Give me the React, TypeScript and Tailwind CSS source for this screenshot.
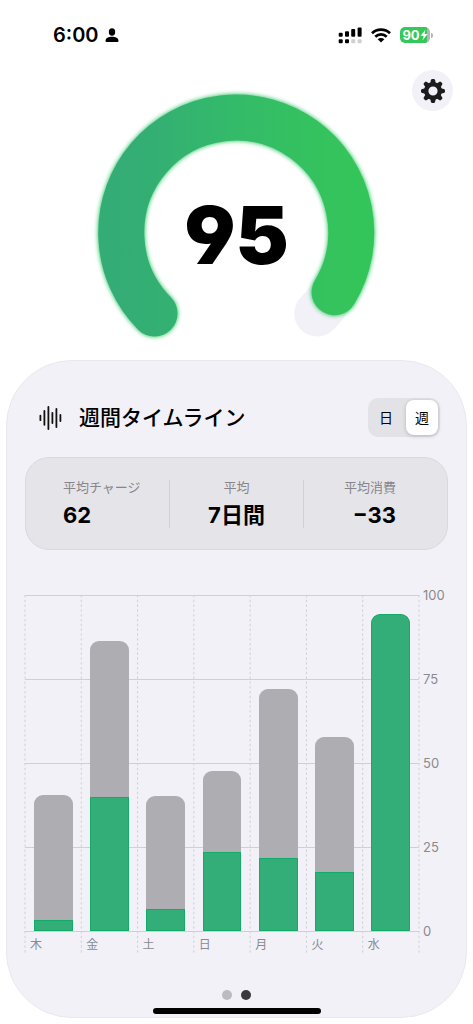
import { useState } from "react";

const days = [
  { label: "木", total: 40.6, charge: 3.4 },
  { label: "金", total: 86.4, charge: 40 },
  { label: "土", total: 40.3, charge: 6.6 },
  { label: "日", total: 47.7, charge: 23.4 },
  { label: "月", total: 72.1, charge: 21.7 },
  { label: "火", total: 57.6, charge: 17.5 },
  { label: "水", total: 94.4, charge: 94.4 },
];

const ticks = [100, 75, 50, 25, 0];

const ranges = ["日", "週"];

const fontClass = "font-['Inter','Noto_Sans_CJK_JP',sans-serif]";
const statLabelClass = "text-[13px] leading-5 text-[#85858a]";
const statValueClass = "mt-0.5 text-[22px] leading-8 font-bold text-black";

function SignalIcon() {
  return (
    <svg width="24" height="18" viewBox="0 0 24 18" aria-hidden="true">
      <g fill="#000">
        <rect x="0.7" y="6.8" width="4" height="4" rx="1" />
        <rect x="7" y="5.2" width="4" height="5.6" rx="1" />
        <rect x="13.2" y="3" width="4" height="7.8" rx="1" />
        <rect x="19.6" y="1.5" width="4" height="9.3" rx="1" />
        <rect x="0.7" y="13.2" width="4" height="4" rx="1" />
        <rect x="7" y="13.2" width="4" height="4" rx="1" />
      </g>
      <g fill="#d0d0d2">
        <rect x="13.2" y="13.2" width="4" height="4" rx="1" />
        <rect x="19.6" y="13.2" width="4" height="4" rx="1" />
      </g>
    </svg>
  );
}

function WifiIcon() {
  return (
    <svg width="20" height="15" viewBox="0 0 20 15" aria-hidden="true">
      <g fill="none" stroke="#000" strokeWidth="2.7">
        <path d="M1 5.3 A12.8 12.8 0 0 1 19 5.3" />
        <path d="M4.3 8.8 A8.1 8.1 0 0 1 15.7 8.8" />
      </g>
      <path
        d="M10 14.6 L6.7 11.3 A4.7 4.7 0 0 1 13.3 11.3 Z"
        fill="#000"
      />
    </svg>
  );
}

function Battery() {
  return (
    <div className="flex items-center gap-px" aria-label="90%">
      <div className="flex h-4 w-[30px] items-center justify-center rounded-[5px] bg-linear-to-r from-[#35c759] from-90% to-[#b5b5b8] to-90% text-white">
        <span className="text-[13px] leading-4 font-bold">90</span>
        <svg width="8" height="12" viewBox="0 0 8 12" aria-hidden="true">
          <path d="M5.6 0.5 L0.6 6.7 H3.6 L2.4 11.5 L7.6 5 H4.5 Z" fill="#fff" />
        </svg>
      </div>
      <div className="h-[5px] w-0.5 rounded-r-full bg-[#b5b5b8]" />
    </div>
  );
}

function GearIcon() {
  const teeth = [0, 45, 90, 135, 180, 225, 270, 315];
  return (
    <svg width="24" height="24" viewBox="-12 -12 24 24" aria-hidden="true">
      <g fill="#1c1c1e">
        {teeth.map((a) => (
          <path
            key={a}
            d="M-2.8 -7.5 L-2.1 -10.8 Q-1.8 -12 -0.8 -12 H0.8 Q1.8 -12 2.1 -10.8 L2.8 -7.5 Z"
            transform={`rotate(${a})`}
          />
        ))}
      </g>
      <circle r="6.8" fill="none" stroke="#1c1c1e" strokeWidth="4.4" />
    </svg>
  );
}

function WaveIcon() {
  return (
    <svg width="24" height="24" viewBox="0 0 24 24" aria-hidden="true">
      <path
        d="M1.4 9.6 V14.2 M5.4 5 V18.8 M9.4 1 V23 M13.4 6.8 V17 M17.4 3 V21 M21.4 9 V15"
        stroke="#111"
        strokeWidth="1.8"
        strokeLinecap="round"
      />
    </svg>
  );
}

function Gauge() {
  return (
    <svg
      className="col-start-1 row-start-1 justify-self-center"
      width="300"
      height="290"
      viewBox="1 0 300 290"
      aria-hidden="true"
    >
      <defs>
        <linearGradient id="arc" x1="0" y1="0.7" x2="1" y2="0.7">
          <stop offset="0" stopColor="#33ad75" />
          <stop offset="0.15" stopColor="#33af73" />
          <stop offset="0.5" stopColor="#34bb69" />
          <stop offset="1" stopColor="#34c55a" />
        </linearGradient>
        <filter
          id="glow"
          filterUnits="userSpaceOnUse"
          x="0"
          y="0"
          width="300"
          height="290"
        >
          <feGaussianBlur stdDeviation="2" />
        </filter>
      </defs>
      <g fill="none" strokeWidth="46" strokeLinecap="round">
        <path d="M68.5 243.5 A115 115 0 1 1 231.2 243.5" stroke="#f2f1f7" />
        <path
          d="M68.5 243.5 A115 115 0 1 1 248.6 222.2"
          stroke="#34c76a"
          strokeWidth="47"
          filter="url(#glow)"
        />
        <path
          d="M68.5 243.5 A115 115 0 1 1 248.6 222.2"
          stroke="url(#arc)"
        />
      </g>
    </svg>
  );
}

function WeekChart() {
  return (
    <div className="mt-[45px] flex text-[#8a8a8e]">
      <div className="grid flex-1">
        {/* Grid lines */}
        <svg
          className="col-start-1 row-start-1 h-[358px] w-full overflow-visible"
          aria-hidden="true"
        >
          {ticks.map((t) => (
            <line
              key={t}
              x1="0"
              x2="100%"
              y1={336 - t * 3.36 + 0.5}
              y2={336 - t * 3.36 + 0.5}
              stroke="#d0d0d4"
            />
          ))}
          {[...days, null].map((_, i) => (
            <line
              key={i}
              x1={`${(i * 100) / 7}%`}
              x2={`${(i * 100) / 7}%`}
              y1="0"
              y2="358"
              stroke="#d0d0d4"
              strokeDasharray="2.4 2.4"
            />
          ))}
        </svg>

        {/* Bars */}
        <div className="col-start-1 row-start-1 grid grid-cols-7">
          {days.map((d) => (
            <div key={d.label}>
              <div className="flex h-[336px] items-end justify-center">
                <div
                  className="flex w-[69%] flex-col justify-end overflow-hidden rounded-t-[9px] bg-[#aeadb2]"
                  style={{ height: `${d.total}%` }}
                >
                  <div
                    className={`border border-[#12ab67] bg-[#33ae78] ${
                      d.charge === d.total ? "rounded-t-[9px]" : ""
                    }`}
                    style={{ height: `${(d.charge / d.total) * 100}%` }}
                  />
                </div>
              </div>
              <div className="pt-1.5 pl-[5px] text-xs leading-4">{d.label}</div>
            </div>
          ))}
        </div>
      </div>

      <div className="flex h-[337px] w-[29px] flex-col justify-between pt-px pl-1 text-[13px]">
        {ticks.map((t) => (
          <span key={t} className="flex h-0 items-center">
            {t}
          </span>
        ))}
      </div>
    </div>
  );
}

export default function App() {
  const [range, setRange] = useState("週");

  return (
    <main
      className={`flex min-h-screen flex-col bg-white pb-[6px] text-black ${fontClass}`}
    >
      {/* Status bar */}
      <header className="flex h-[70px] items-center justify-between pr-10 pl-[53px]">
        <div className="flex items-center gap-[6px]">
          <span className="text-xl font-semibold">6:00</span>
          <svg width="14" height="15" viewBox="0 0 14 15" aria-hidden="true">
            <ellipse cx="7" cy="4" rx="3.2" ry="3.7" />
            <path d="M0.5 13 C0.5 10 3.5 8.8 7 8.8 S13.5 10 13.5 13 Q13.5 14 12.3 14 H1.7 Q0.5 14 0.5 13 Z" />
          </svg>
        </div>
        <div className="flex items-center gap-[9px]">
          <SignalIcon />
          <WifiIcon />
          <Battery />
        </div>
      </header>

      {/* Score */}
      <section className="grid h-[290px] grid-cols-1">
        <Gauge />
        <div className="col-start-1 row-start-1 self-center justify-self-center pt-10 text-[80px] leading-none font-black [font-feature-settings:'cv03','cv04']">
          95
        </div>
        <button
          aria-label="設定"
          className="col-start-1 row-start-1 mr-5 flex size-[41px] items-center justify-center self-start justify-self-end rounded-full bg-[#f2f1f7]"
        >
          <GearIcon />
        </button>
      </section>

      {/* Timeline card */}
      <section className="mx-[6px] flex flex-1 flex-col rounded-[66px] border border-[#e9e9ed] bg-[#f2f1f7] px-[18px] pt-[37px]">
        <div className="flex items-center pr-2 pl-[14px]">
          <WaveIcon />
          <h1 className="ml-4 flex-1 text-[21px] leading-8 font-medium">
            週間タイムライン
          </h1>
          <div className="grid h-[39px] w-[72px] grid-cols-2 gap-1 rounded-[10px] bg-[#e3e2e7] p-[2px]">
            {ranges.map((r) => (
              <button
                key={r}
                onClick={() => setRange(r)}
                aria-pressed={range === r}
                className={
                  range === r
                    ? "rounded-lg bg-white text-sm shadow-[0_1px_4px_rgba(0,0,0,0.2)]"
                    : "rounded-lg text-sm"
                }
              >
                {r}
              </button>
            ))}
          </div>
        </div>

        <div className="mt-5 grid h-[93px] grid-cols-[1fr_1px_1fr_1px_1fr] items-center rounded-3xl border border-[#dad9de] bg-[#e5e4e9] px-[11px]">
          <div className="pl-[26px]">
            <div className={statLabelClass}>平均チャージ</div>
            <div className={statValueClass}>62</div>
          </div>
          <div className="h-12 bg-[#d1d0d5]" />
          <div className="text-center">
            <div className={statLabelClass}>平均</div>
            <div className={statValueClass}>7日間</div>
          </div>
          <div className="h-12 bg-[#d1d0d5]" />
          <div className="pr-10 text-right">
            <div className={statLabelClass}>平均消費</div>
            <div className={statValueClass}>−33</div>
          </div>
        </div>

        <WeekChart />

        {/* Page dots and home indicator */}
        <div className="mt-auto flex flex-col items-center pb-[3px]">
          <div className="flex gap-[9px]">
            <span className="size-[10px] rounded-full bg-[#bcbbc0]" />
            <span className="size-[10px] rounded-full bg-[#3a3a3c]" />
          </div>
          <div className="mt-2 h-[6px] w-[168px] rounded-full bg-black" />
        </div>
      </section>
    </main>
  );
}
